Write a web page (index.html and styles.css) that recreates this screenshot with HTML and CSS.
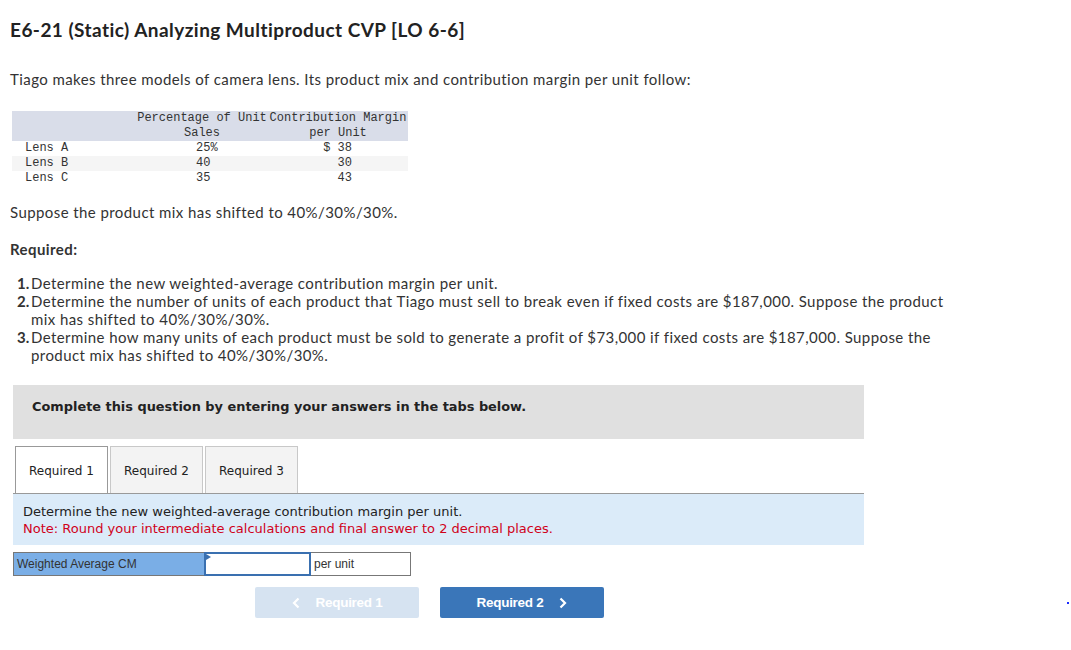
FILE: index.html
```html
<!DOCTYPE html>
<html>
<head>
<meta charset="utf-8">
<link rel="stylesheet" href="styles.css">
</head>
<body>
<div class="page">
  <h1 class="title">E6-21 (Static) Analyzing Multiproduct CVP [LO 6-6]</h1>
  <p class="intro">Tiago makes three models of camera lens. Its product mix and contribution margin per unit follow:</p>
  <table class="data">
    <thead>
      <tr><th class="c1"></th><th class="c2">Percentage of Unit<br>Sales</th><th class="c3">Contribution Margin<br>per Unit</th></tr>
    </thead>
    <tbody>
      <tr><td class="c1">Lens A</td><td class="c2">25%</td><td class="c3">$ 38</td></tr>
      <tr class="alt"><td class="c1">Lens B</td><td class="c2">40</td><td class="c3">30</td></tr>
      <tr><td class="c1">Lens C</td><td class="c2">35</td><td class="c3">43</td></tr>
    </tbody>
  </table>
  <p class="shift">Suppose the product mix has shifted to 40%/30%/30%.</p>
  <p class="req">Required:</p>
  <ol class="reqlist">
    <li><span class="num">1.</span><span class="txt">Determine the new weighted-average contribution margin per unit.</span></li>
    <li><span class="num">2.</span><span class="txt">Determine the number of units of each product that Tiago must sell to break even if fixed costs are $187,000. Suppose the product mix has shifted to 40%/30%/30%.</span></li>
    <li><span class="num">3.</span><span class="txt">Determine how many units of each product must be sold to generate a profit of $73,000 if fixed costs are $187,000. Suppose the product mix has shifted to 40%/30%/30%.</span></li>
  </ol>
  <div class="instr">Complete this question by entering your answers in the tabs below.</div>
  <div class="tabs">
    <div class="tab active">Required 1</div>
    <div class="tab">Required 2</div>
    <div class="tab">Required 3</div>
  </div>
  <div class="panel">
    <div>Determine the new weighted-average contribution margin per unit.</div>
    <div class="note">Note: Round your intermediate calculations and final answer to 2 decimal places.</div>
  </div>
  <div class="answer">
    <div class="lbl">Weighted Average CM</div>
    <div class="inp"></div>
    <div class="unit">per unit</div>
  </div>
  <div class="nav">
    <div class="btn prev"><svg class="chev" width="8" height="12" viewBox="0 0 8 12"><path d="M6.5 1.5 L2 6 L6.5 10.5" fill="none" stroke="#fff" stroke-width="2.2"/></svg><span>Required 1</span></div>
    <div class="btn next"><span>Required 2</span><svg class="chev" width="8" height="12" viewBox="0 0 8 12"><path d="M1.5 1.5 L6 6 L1.5 10.5" fill="none" stroke="#fff" stroke-width="2.2"/></svg></div>
  </div>
</div>
<div class="dot"></div>
</body>
</html>
```
FILE: styles.css
```css
html, body { margin: 0; padding: 0; background: #fff; }
body { font-family: "Lato", "Open Sans", sans-serif; color: #333; }
.page { padding: 0 10px; position: relative; }
.title { margin: 18px 0 0; font-size: 19px; line-height: 24px; font-weight: 700; color: #222; letter-spacing: 0.45px; }
.intro { margin: 27px 0 0; font-size: 15px; line-height: 20px; letter-spacing: 0.42px; }
.data { margin: 22px 0 0 2px; border-collapse: collapse; font-family: "Liberation Mono", monospace; font-size: 12px; color: #333; }
.data th { background: #d9dde9; font-weight: 400; line-height: 15px; padding: 0; text-align: center; }
.data td { line-height: 15px; padding: 0; }
.data .c1 { width: 124px; }
.data td.c1 { padding-left: 13px; width: 111px; }
.data th.c2 { width: 132px; }
.data td.c2 { padding-left: 60px; width: 72px; }
.data th.c3 { width: 140px; }
.data td.c3 { text-align: right; padding-right: 56px; }
.data tr.alt td { background: #f5f5f5; }
.shift { margin: 16px 0 0; font-size: 15px; line-height: 20px; letter-spacing: 0.42px; }
.req { margin: 17px 0 0; font-size: 15px; line-height: 20px; font-weight: 700; letter-spacing: 0.42px; }
.reqlist { list-style: none; margin: 15px 0 0; padding: 0 0 0 7px; font-size: 15px; line-height: 18px; letter-spacing: 0.42px; }
.reqlist li { display: flex; }
.reqlist .num { font-weight: 700; width: 14px; flex: none; letter-spacing: 0; }
.reqlist .txt { width: 925px; }
.instr { margin: 21px 0 0 3px; width: 851px; height: 54px; box-sizing: border-box; padding: 14px 0 0 19px; background: #e0e0e0; font-family: "DejaVu Sans", Verdana, sans-serif; font-weight: 700; font-size: 12.9px; line-height: 16px; color: #222; }
.tabs { margin: 7px 0 0 3px; width: 851px; height: 48px; box-sizing: border-box; border-bottom: 1px solid #999; display: flex; gap: 2px; padding-left: 2px; }
.tab { width: 93px; height: 47px; box-sizing: border-box; border: 1px solid #c8c8c8; border-bottom: 0; background: #f3f3f3; display: flex; align-items: center; justify-content: center; font-family: "DejaVu Sans", Verdana, sans-serif; font-size: 12px; color: #222; padding-top: 1px; }
.tab.active { background: #fff; border-color: #999; }
.panel { margin-left: 3px; width: 851px; box-sizing: border-box; background: #dbebf9; padding: 9px 10px 8px; font-family: "DejaVu Sans", Verdana, sans-serif; font-size: 13px; line-height: 17px; color: #222; }
.panel .note { color: #d0021b; }
.answer { margin: 7px 0 0 3px; display: flex; height: 24px; font-family: "Liberation Sans", Arial, sans-serif; font-size: 12px; color: #333; }
.answer .lbl { width: 191px; box-sizing: border-box; background: #7aaee6; border: 1px solid #777; border-right: 0; padding-left: 3px; display: flex; align-items: center; }
.answer .inp { width: 107px; box-sizing: border-box; border: 2px solid #3a70b0; background: #fff; position: relative; }
.answer .inp::before { content: ""; position: absolute; left: 0; top: 0; border-left: 5px solid #3a70b0; border-top: 3px solid transparent; border-bottom: 3px solid transparent; }
.answer .unit { width: 100px; box-sizing: border-box; border: 1px solid #777; border-left: 0; padding-left: 3px; display: flex; align-items: center; }
.nav { margin: 11px 0 0 245px; display: flex; gap: 21px; }
.btn { width: 164px; height: 31px; border-radius: 2px; display: flex; align-items: center; justify-content: center; gap: 16px; font-family: "Liberation Sans", Arial, sans-serif; font-weight: 700; font-size: 13.5px; color: #fff; letter-spacing: -0.3px; }
.btn.prev { background: #d6e3f1; }
.btn.next { background: #3a76b9; }
.dot { position: absolute; left: 1067px; top: 602px; width: 2px; height: 2px; background: #1a2cff; }
```
